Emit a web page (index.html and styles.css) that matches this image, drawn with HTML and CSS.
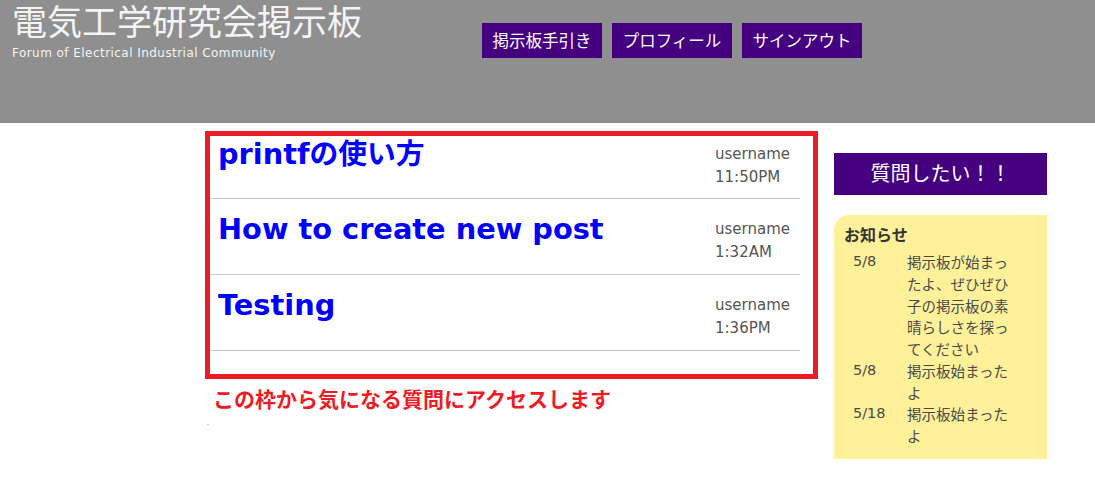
FILE: index.html
```html
<!DOCTYPE html>
<html lang="ja">
<head>
<meta charset="utf-8">
<title>電気工学研究会掲示板</title>
<link rel="stylesheet" href="styles.css">
</head>
<body>
<header class="site-header">
  <div class="brand">
    <h1 class="site-title">電気工学研究会掲示板</h1>
    <p class="site-sub">Forum of Electrical Industrial Community</p>
  </div>
  <nav class="nav">
    <a class="nav-btn" href="#">掲示板手引き</a>
    <a class="nav-btn" href="#">プロフィール</a>
    <a class="nav-btn" href="#">サインアウト</a>
  </nav>
</header>
<div class="page">
  <main class="main">
    <section class="post-box">
      <ul class="post-list">
        <li class="post">
          <a class="post-title" href="#">printfの使い方</a>
          <div class="post-meta"><span>username</span><span>11:50PM</span></div>
        </li>
        <li class="post">
          <a class="post-title" href="#">How to create new post</a>
          <div class="post-meta"><span>username</span><span>1:32AM</span></div>
        </li>
        <li class="post">
          <a class="post-title" href="#">Testing</a>
          <div class="post-meta"><span>username</span><span>1:36PM</span></div>
        </li>
      </ul>
    </section>
    <p class="caption">この枠から気になる質問にアクセスします</p>
    <div class="dot"></div>
  </main>
  <aside class="side">
    <a class="ask-btn" href="#">質問したい！！</a>
    <section class="notice">
      <h2 class="notice-title">お知らせ</h2>
      <dl class="notice-list">
        <dt>5/8</dt><dd>掲示板が始まったよ、ぜひぜひ子の掲示板の素晴らしさを探ってください</dd>
        <dt>5/8</dt><dd>掲示板始まったよ</dd>
        <dt>5/18</dt><dd>掲示板始まったよ</dd>
      </dl>
    </section>
  </aside>
</div>
</body>
</html>
```
FILE: styles.css
```css
body {
  margin: 0;
  font-family: "DejaVu Sans", "Noto Sans CJK JP", sans-serif;
  background: #fff;
}

.site-header {
  display: flex;
  height: 123px;
  background: #8f8f8f;
}

.brand {
  flex: 0 0 482px;
  box-sizing: border-box;
  padding-left: 12px;
}

.site-title {
  margin: 0;
  font: 400 35px/40px "Noto Sans CJK JP", sans-serif;
  color: #f4f4f4;
}

.site-sub {
  margin: 6px 0 0;
  font: 12px/1.2 "DejaVu Sans", sans-serif;
  letter-spacing: 0.45px;
  color: #f4f4f4;
}

.nav {
  display: flex;
  align-items: flex-start;
  gap: 10px;
  padding-top: 23px;
}

.nav-btn {
  width: 120px;
  height: 35px;
  line-height: 35px;
  text-align: center;
  background: #45007f;
  color: #fff;
  font-family: "Noto Sans CJK JP", sans-serif;
  font-size: 16.5px;
  text-decoration: none;
}

.page {
  display: flex;
  align-items: flex-start;
}

.main {
  margin-left: 205px;
  width: 613px;
  padding-top: 8px;
}

.post-box {
  border: 5px solid #ed1c24;
  padding: 0 13px 23px 0;
}

.post-list {
  list-style: none;
  margin: 0;
  padding: 0;
}

.post {
  display: flex;
  justify-content: space-between;
  align-items: flex-start;
  height: 63px;
  padding-top: 12px;
  border-bottom: 1px solid #cccccc;
}

.post:first-child {
  padding-top: 0;
  height: 62px;
}

.post-title {
  padding-left: 8px;
  font: bold 28.8px/36px "DejaVu Sans", "Noto Sans CJK JP", sans-serif;
  color: #0000ff;
  text-decoration: none;
}

.post-meta {
  width: 85px;
  margin-top: 7px;
  display: flex;
  flex-direction: column;
  font: 15px/23px "DejaVu Sans", sans-serif;
  color: #555;
}

.caption {
  margin: 4px 0 0 8px;
  font: bold 21px/1.5 "Noto Sans CJK JP", sans-serif;
  color: #ed1c24;
}

.dot {
  width: 2px;
  height: 1px;
  margin: 9px 0 0 2px;
  background: #ccc;
}

.side {
  margin-left: 16px;
  width: 213px;
  padding-top: 30px;
}

.ask-btn {
  display: block;
  height: 42px;
  line-height: 40px;
  text-align: center;
  background: #45007f;
  color: #fff;
  font-family: "Noto Sans CJK JP", sans-serif;
  font-size: 20px;
  text-decoration: none;
}

.notice {
  margin-top: 20px;
  background: #fff09a;
  border-top-left-radius: 15px;
  padding: 8px 0 12px 10px;
}

.notice-title {
  margin: 0;
  font: bold 16px/22px "Noto Sans CJK JP", sans-serif;
  color: #333;
}

.notice-list {
  display: grid;
  grid-template-columns: 54px 110px;
  margin: 6px 0 0 9px;
  font-size: 14.5px;
  line-height: 1.5;
  color: #4a4a4a;
}

.notice-list dt {
  font-family: "DejaVu Sans", sans-serif;
}

.notice-list dd {
  margin: 0;
  font-family: "Noto Sans CJK JP", sans-serif;
}
```
